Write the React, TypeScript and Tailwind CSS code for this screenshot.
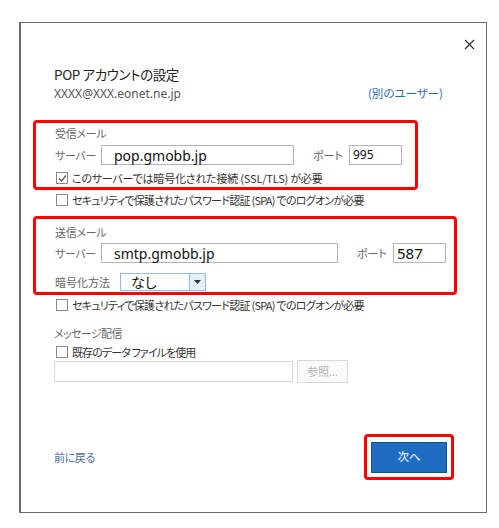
import React from 'react';

const jp = { fontFamily: '"Noto Sans CJK JP", "Noto Sans", sans-serif', fontFeatureSettings: '"palt"' };

const Checkbox = ({ checked = false, label, track }: { checked?: boolean; label: string; track: string }) => (
  <div className="flex h-[16px] items-center gap-[4px] pl-[1px]">
    <div className="flex h-[12px] w-[12px] items-center justify-center border border-[#8a8a8a] bg-white">
      {checked && (
        <svg width="9" height="9" viewBox="0 0 9 9">
          <path d="M1 4.5 L3.5 7 L8 1.5" fill="none" stroke="#555" strokeWidth="1.2" />
        </svg>
      )}
    </div>
    <span className={`text-[11px] text-[#333] ${track}`}>{label}</span>
  </div>
);

const ServerRow = ({
  server,
  serverW,
  port,
  portSize,
}: {
  server: string;
  serverW: string;
  port: string;
  portSize: string;
}) => (
  <div className="flex h-[20px] items-center">
    <span className="w-[46px] text-[11px] tracking-[-0.4px] text-[#666]">サーバー</span>
    <div className={`flex h-[20px] ${serverW} items-center border border-[#b4b4b4] bg-white pl-[12px]`}>
      <span className="text-[14px] text-[#111]" style={{ fontFamily: '"Noto Sans", sans-serif' }}>
        {server}
      </span>
    </div>
    <span className="ml-[19px] w-[36px] text-[11px] text-[#666]">ポート</span>
    <div className="flex h-[20px] w-[53px] items-center border border-[#b4b4b4] bg-white pl-[3px]">
      <span className={`${portSize} text-[#111]`} style={{ fontFamily: '"Noto Sans", sans-serif' }}>
        {port}
      </span>
    </div>
  </div>
);

export default function App() {
  return (
    <div className="min-h-[528px] w-[499px] bg-white pl-[19px] pt-[22px]" style={jp}>
      <div className="h-[491px] w-[468px] border border-l-2 border-[#6a6a6a] bg-white">
        {/* close */}
        <div className="flex h-[39px] items-center justify-end pr-[11px] pt-[4px]">
          <svg width="11" height="11" viewBox="0 0 11 11">
            <path d="M1 1 L10 10 M10 1 L1 10" stroke="#333" strokeWidth="1.3" />
          </svg>
        </div>

        <div className="pl-[33px]">
          <div className="flex h-[24px] items-center text-[13.5px] tracking-[-0.4px] text-[#222]">POP アカウントの設定</div>
          <div className="flex h-[16px] items-center justify-between pr-[43px]">
            <span className="text-[12px] text-[#555]" style={{ fontFamily: '"Noto Sans", sans-serif' }}>
              XXXX@XXX.eonet.ne.jp
            </span>
            <span className="text-[11.5px] text-[#2f6db5]">(別のユーザー)</span>
          </div>
        </div>

        <div className="pl-[12px]">
          {/* incoming */}
          <div className="mt-[18px] h-[70px] w-[385px] rounded-[4px] border-[3px] border-[#ff0000] pl-[19px] pt-[2px]">
            <div className="flex h-[16px] items-center text-[11px] tracking-[-0.3px] text-[#666]">受信メール</div>
            <div className="mt-[4px]">
              <ServerRow server="pop.gmobb.jp" serverW="w-[193px]" port="995" portSize="text-[12px]" />
            </div>
            <div className="mt-[5px]">
              <Checkbox checked label="このサーバーでは暗号化された接続 (SSL/TLS) が必要" track="tracking-[-0.2px]" />
            </div>
          </div>

          <div className="mt-[2px] pl-[22px]">
            <Checkbox label="セキュリティで保護されたパスワード認証 (SPA) でのログオンが必要" track="tracking-[-0.75px]" />
          </div>

          {/* outgoing */}
          <div className="mt-[8px] h-[79px] w-[424px] rounded-[4px] border-[3px] border-[#ff0000] pl-[19px] pt-[5px]">
            <div className="flex h-[16px] items-center text-[11px] tracking-[-0.3px] text-[#666]">送信メール</div>
            <div className="mt-[3px]">
              <ServerRow server="smtp.gmobb.jp" serverW="w-[237px]" port="587" portSize="text-[15px]" />
            </div>
            <div className="mt-[10px] flex h-[18px] items-center">
              <span className="w-[65px] text-[11px] text-[#666]">暗号化方法</span>
              <div className="flex h-[18px] w-[86px] border border-[#8fbde8] bg-white">
                <div className="flex flex-1 items-center pl-[10px] text-[14px] text-[#111]">なし</div>
                <div className="flex w-[16px] items-center justify-center border-l border-[#8fbde8] bg-[#e3eefa]">
                  <svg width="7" height="4" viewBox="0 0 7 4">
                    <path d="M0 0 L7 0 L3.5 4 Z" fill="#333" />
                  </svg>
                </div>
              </div>
            </div>
          </div>

          <div className="mt-[2px] pl-[22px]">
            <Checkbox label="セキュリティで保護されたパスワード認証 (SPA) でのログオンが必要" track="tracking-[-0.75px]" />
          </div>

          {/* delivery */}
          <div className="pl-[21px]">
            <div className="mt-[12px] flex h-[16px] items-center text-[11px] tracking-[-0.6px] text-[#666]">メッセージ配信</div>
            <div className="mt-[3px] pl-[1px]">
              <Checkbox label="既存のデータ ファイルを使用" track="tracking-[-0.9px]" />
            </div>
            <div className="flex h-[23px] items-center gap-[4px]">
              <div className="h-[21px] w-[239px] border border-[#d6d6d6] bg-white" />
              <div className="flex h-[23px] w-[51px] items-center justify-center border border-[#dadada] bg-[#fafafa] text-[11px] text-[#b5b5b5]">
                参照...
              </div>
            </div>
          </div>

          {/* footer */}
          <div className="mt-[51px] flex h-[46px] items-center justify-between pl-[21px] pr-[32px]">
            <span className="text-[11px] tracking-[-0.4px] text-[#4f6f9f]">前に戻る</span>
            <div className="flex h-[46px] w-[90px] items-center justify-center rounded-[4px] border-[3px] border-[#ff0000]">
              <div className="flex h-[31px] w-[76px] items-center justify-center border border-[#1a4f8f] bg-[#1f6dc2] text-[11.5px] text-white">
                次へ
              </div>
            </div>
          </div>
        </div>
      </div>
    </div>
  );
}
